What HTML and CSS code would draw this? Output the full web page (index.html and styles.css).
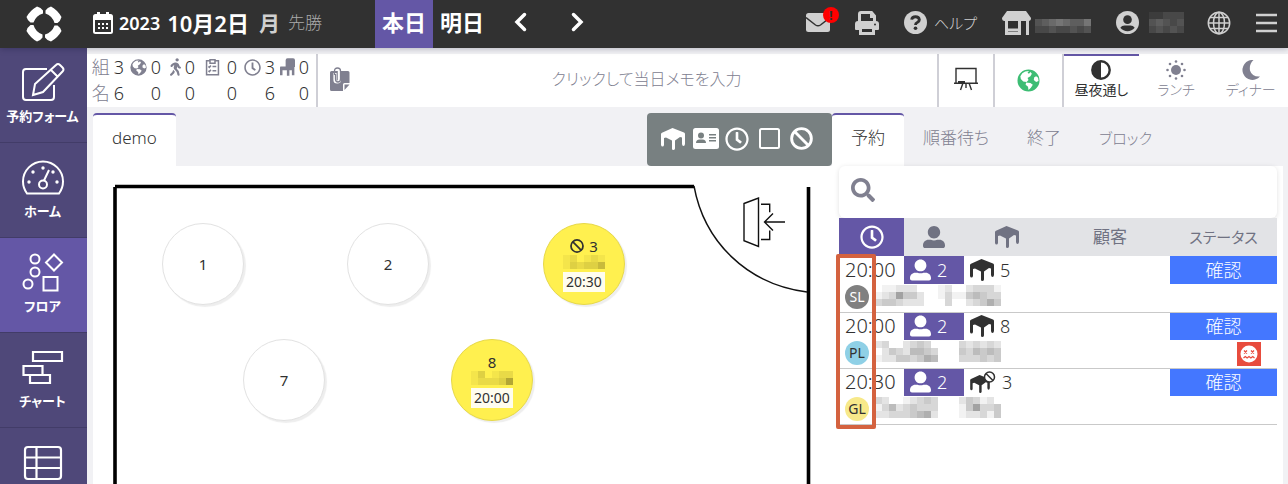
FILE: index.html
```html
<!DOCTYPE html>
<html lang="ja">
<head>
<meta charset="utf-8">
<meta name="viewport" content="width=device-width, initial-scale=1">
<title>フロア</title>
<link rel="stylesheet" href="styles.css">
<script src="mosaic.js" defer></script>
</head>
<body>
<svg class="sprite" aria-hidden="true">
  <symbol id="clock" viewBox="0 0 512 512"><path d="M256 8C119 8 8 119 8 256s111 248 248 248 248-111 248-248S393 8 256 8zm0 448c-110.500 0-200-89.500-200-200S145.500 56 256 56s200 89.500 200 200-89.500 200-200 200zm61.800-104.400l-84.900-61.700c-3.100-2.300-4.900-5.900-4.900-9.700V116c0-6.600 5.400-12 12-12h32c6.600 0 12 5.400 12 12v141.700l66.800 48.600c5.400 3.900 6.500 11.400 2.600 16.800L334.600 349c-3.900 5.300-11.400 6.500-16.800 2.600z"/></symbol>
  <symbol id="search" viewBox="0 0 512 512"><path d="M505 442.700L405.300 343c-4.500-4.500-10.600-7-17-7H372c27.600-35.300 44-79.700 44-128C416 93.100 322.900 0 208 0S0 93.100 0 208s93.100 208 208 208c48.300 0 92.700-16.400 128-44v16.300c0 6.400 2.500 12.500 7 17l99.700 99.700c9.400 9.400 24.600 9.400 33.900 0l28.300-28.300c9.400-9.400 9.400-24.600.1-34zM208 336c-70.700 0-128-57.200-128-128 0-70.700 57.200-128 128-128 70.700 0 128 57.200 128 128 0 70.700-57.200 128-128 128z"/></symbol>
  <symbol id="user" viewBox="0 0 512 512"><path d="M256 288c79.500 0 144-64.500 144-144S335.500 0 256 0 112 64.500 112 144s64.500 144 144 144zm128 32h-55.100c-22.200 10.200-46.900 16-72.900 16s-50.600-5.800-72.900-16H128C57.300 320 0 377.300 0 448v16c0 26.500 21.500 48 48 48h416c26.500 0 48-21.500 48-48v-16c0-70.700-57.300-128-128-128z"/></symbol>
  <symbol id="walk" viewBox="0 0 320 512"><path d="M208 96c26.500 0 48-21.500 48-48S234.500 0 208 0s-48 21.500-48 48 21.500 48 48 48zm94.500 149.100l-23.300-11.800-9.700-29.400c-14.700-44.600-55.700-75.800-102.200-75.900-36-.1-55.900 10.100-93.300 25.200-21.600 8.700-39.300 25.200-49.700 46.200L17.600 213c-7.800 15.800-1.500 35 14.200 42.900 15.600 7.900 34.600 1.500 42.500-14.300L81 228c3.500-7 9.300-12.500 16.500-15.400l26.800-10.800-15.200 60.700c-5.200 20.800.4 42.900 14.900 58.800l59.900 65.400c7.200 7.900 12.300 17.400 14.900 27.700l18.300 73.300c4.300 17.100 21.700 27.600 38.800 23.300 17.100-4.300 27.600-21.700 23.300-38.800l-22.200-89c-2.600-10.300-7.700-19.900-14.900-27.700l-45.500-49.700 17.200-68.700 5.500 16.500c5.300 16.100 16.700 29.400 31.700 37l23.300 11.800c15.600 7.900 34.600 1.500 42.500-14.300 7.700-15.700 1.400-35.100-14.300-43zM73.600 385.800c-3.200 8.100-8 15.400-14.200 21.500l-50 50.100c-12.500 12.500-12.500 32.800 0 45.300s32.700 12.500 45.200 0l59.400-59.400c6.100-6.100 10.900-13.400 14.200-21.500l13.500-33.800c-55.300-60.300-38.700-41.800-47.400-53.700l-20.700 51.500z"/></symbol>
  <symbol id="earth" viewBox="0 0 24 24"><path fill-rule="evenodd" d="M12 .5a11.500 11.500 0 1 1 0 23a11.500 11.500 0 0 1 0-23zM3.500 7.500L4 10.500L6.500 13L10 13.500L12 11.500L11 9.500L14 7.500L15.500 5L14 3L12.500 5L11 4L12.500 2L8.500 2.500L5.500 4.500zM9.500 14L9 16.500L11.500 18.500L12 22L14.500 19.500L16.500 16.500L14 14.500zM18 8.500L17.500 11.500L20 13.500L22.500 12.500L22 9L20 7.500z"/></symbol>
  <symbol id="clipboard" viewBox="0 0 24 28"><path class="line" stroke-width="2.400" d="M8 4H2.500v22.500h19V4H16M8 2.500h8V8H8zM5.500 13l1.500 1.500 2.500-3M12 13h6M5.500 20l1.500 1.500 2.500-3M12 20h6"/></symbol>
  <symbol id="chair" viewBox="0 0 24 28"><path d="M9 3q0-3 3-3h9q3 0 3 3v11H9zM1 13h22v14h-4v-8h-4v9h-4v-9H4v8H0V15q0-2 1-2z"/></symbol>
  <symbol id="table" viewBox="0 0 24 22"><path d="M11.500 0L23 4.500Q24.500 5.500 24 7V16q-.2 2-1.500 2T21 16V9.500l-2-.5-5 3.500v8q-.3 1.500-1.700 1.500T11 20.500v-8L5 9.500l-2 .5v7q-.3 1.500-1.500 1.500T0 17V7q-.3-1.500 1-2.200z"/></symbol>
  <symbol id="ban" viewBox="0 0 24 24"><circle class="line" cx="12" cy="12" r="10.300" stroke-width="3"/><path class="line" stroke-width="3" d="M5 5l14 14"/></symbol>
</svg>

<header class="topbar">
  <a class="logo" href="#" aria-label="トップ">
    <svg width="36" height="36" viewBox="0 0 36 36">
      <g id="petal"><path d="M.5 11Q4 4.500 11 .5q4 1 6 4v3Q10 9.500 7.500 16.500h-3Q1.500 14.500.5 11z"/></g>
      <use href="#petal" transform="rotate(90 18 18)"/><use href="#petal" transform="rotate(180 18 18)"/><use href="#petal" transform="rotate(270 18 18)"/>
    </svg>
  </a>
  <button class="date">
    <svg class="icon" width="20" height="24" viewBox="0 0 20 24"><path class="line" stroke-width="2" d="M2.500 4h15q1.500 0 1.500 1.500v15q0 1.500-1.500 1.500h-15Q1 22 1 20.500v-15Q1 4 2.500 4z"/><path d="M1 4h18v5H1zM4 1h3v4H4zM13 1h3v4h-3zM5 12h2v2H5zM9 12h2v2H9zM13 12h2v2h-2zM5 16h2v2H5zM9 16h2v2H9zM13 16h2v2h-2z"/></svg>
    <span class="year">2023</span><span class="day">10月2日</span><span class="weekday">月</span><span class="rokuyo">先勝</span>
  </button>
  <nav class="day-nav">
    <button class="active">本日</button><button>明日</button>
    <button class="arrow" aria-label="前日"><svg width="14" height="20" viewBox="0 0 14 20"><path class="line" stroke-width="3.500" stroke-linecap="round" d="M10.500 2.500L3 10l7.500 7.500"/></svg></button>
    <button class="arrow" aria-label="翌日"><svg width="14" height="20" viewBox="0 0 14 20"><path class="line" stroke-width="3.500" stroke-linecap="round" d="M3.500 2.500L11 10l-7.500 7.500"/></svg></button>
  </nav>
  <div class="tools">
    <button class="mail" aria-label="メール"><svg width="24" height="19" viewBox="0 0 24 19"><rect width="24" height="19" rx="2.500"/><path class="cut" stroke-width="1.500" d="M0 4.500l9.500 7.500q2.500 1.700 5 0L24 4.500"/></svg><span class="alert">!</span></button>
    <button aria-label="印刷"><svg width="24" height="24" viewBox="0 0 24 24"><path class="line" stroke-width="3" d="M4.500 11V3q0-1.500 1.500-1.500h10.500L19.500 5v6M5.500 16.500h13v6h-13z"/><path d="M3 10h18q3 0 3 3v5q0 1-1 1h-3v-4H4v4H1q-1 0-1-1v-5q0-3 3-3zM15 2h2l3 3v2h-5z"/><circle class="dark" cx="20" cy="13.500" r="1"/></svg></button>
    <button class="help"><svg width="23" height="23" viewBox="0 0 24 24"><circle cx="12" cy="12" r="12"/><path class="cut" stroke-width="3" d="M8 9q.5-3 4-3t4 3q0 1.800-2.200 3Q12 12.700 12 14.500"/><circle class="dark" cx="12" cy="18" r="1.900"/></svg><span>ヘルプ</span></button>
    <button class="shop" aria-label="店舗"><svg width="29" height="24" viewBox="0 0 29 24"><path d="M5 0h19l5 7q0 3-2.500 3h-24Q0 10 0 7z"/><path class="line" stroke-width="3" d="M4.500 9v13.500h13V9M3 19h14"/><path d="M24 9h3v15h-3z"/></svg><svg class="mosaic on-dark" data-rows="34565446|22322323"></svg></button>
    <button class="account" aria-label="アカウント"><svg width="23" height="23" viewBox="0 0 24 24"><circle cx="12" cy="12" r="12"/><circle class="dark" cx="12" cy="9" r="4.500"/><path class="dark" d="M4.500 17.500Q6 15 9 15h6q3 0 4.500 2.500-3 3.500-7.500 3.500T4.500 17.500z"/></svg><svg class="mosaic on-dark" data-rows="011222|034323|023232"></svg></button>
    <button class="lang" aria-label="言語"><svg width="24" height="24" viewBox="0 0 24 24"><g class="line" stroke-width="1.500"><circle cx="12" cy="12" r="10.700"/><ellipse cx="12" cy="12" rx="5.500" ry="10.700"/><path d="M12 1v22M1 12h22M3 6.500h18M3 17.500h18"/></g></svg></button>
    <button aria-label="メニュー"><svg width="21" height="20" viewBox="0 0 21 20"><path class="line" stroke-width="2.400" d="M0 2h21M0 10h21M0 18h21"/></svg></button>
  </div>
</header>

<div class="body">
  <nav class="side">
    <a href="#"><svg width="44" height="40" viewBox="0 0 44 40"><path class="line" stroke-width="2" d="M26 7H5Q2 7 2 10v25q0 3 3 3h25q3 0 3-3V23M12 33l2-11L35 3q2-2 4 0l2.500 2.500q2 2 0 4L22 30zM30 8l6.500 6.500"/></svg>予約フォーム</a>
    <a href="#"><svg width="44" height="40" viewBox="0 0 44 40"><path class="line" stroke-width="2" d="M6 36.500Q2 31 2 24.500a20 20 0 0 1 40 0Q42 31 38 36.500zM23 23.500L28 13"/><circle class="line" stroke-width="2" cx="22" cy="27.500" r="4"/><g><circle cx="22" cy="11" r="1.700"/><circle cx="12" cy="15" r="1.700"/><circle cx="32" cy="15" r="1.700"/><circle cx="8" cy="25" r="1.700"/><circle cx="36" cy="25" r="1.700"/></g></svg>ホーム</a>
    <a href="#" class="active"><svg width="44" height="40" viewBox="0 0 44 40"><g class="line" stroke-width="2"><circle cx="14" cy="7" r="4.500"/><circle cx="14" cy="20" r="4.500"/><circle cx="7" cy="32" r="4.500"/><path d="M33 2.500l8 8-8 8-8-8zM22.500 25h14v13.500h-14z"/></g></svg>フロア</a>
    <a href="#"><svg width="44" height="40" viewBox="0 0 44 40"><path class="line" stroke-width="2.200" d="M12 5h29v9H12zM2.500 19h19v9h-19zM9 28h20v8H9z"/></svg>チャート</a>
    <a href="#" aria-label="台帳"><svg width="44" height="40" viewBox="0 0 44 40"><g class="line" stroke-width="2.200"><rect x="4" y="5" width="36" height="32" rx="3"/><path d="M15.500 5v32M4 15.500h36M4 26h36"/></g></svg></a>
  </nav>

  <main>
    <section class="summary">
      <table class="counts">
        <colgroup><col class="c0"><col class="c1"><col class="c2"><col class="c3"><col class="c4"><col class="c2"></colgroup>
        <tr>
          <td><div><span>組</span><b>3</b></div></td>
          <td><div><svg width="17" height="17"><use href="#earth"/></svg><b>0</b></div></td>
          <td><div><svg width="11" height="18"><use href="#walk"/></svg><b>0</b></div></td>
          <td><div class="wide"><svg width="15" height="18"><use href="#clipboard"/></svg><b>0</b></div></td>
          <td><div><svg width="17" height="17"><use href="#clock"/></svg><b>3</b></div></td>
          <td><div><svg width="15" height="18"><use href="#chair"/></svg><b>0</b></div></td>
        </tr>
        <tr>
          <td><div><span>名</span><b>6</b></div></td>
          <td><b>0</b></td><td><b>0</b></td><td><b>0</b></td><td><b>6</b></td><td><b>0</b></td>
        </tr>
      </table>
      <label class="memo">
        <svg width="20" height="24" viewBox="0 0 20 24"><path d="M1.500 4H18q1.500 0 1.500 1.500V16h-5Q13 16 13 17.500V24H1.500Q0 24 0 22.500v-17Q0 4 1.500 4zM14.500 17.500h5L14.500 23z"/><g fill="none" stroke-width="3.200" stroke="#fff"><path d="M5 6v7q0 2 2.200 2t2.200-2V4"/></g><path class="line" stroke-width="1.300" d="M4.500 8V4Q4.500 1 7.500 1t3 3v8q0 3-2.500 3T5.500 12V7"/></svg>
        <input type="text" placeholder="クリックして当日メモを入力" aria-label="当日メモ">
      </label>
      <button class="tile board" aria-label="ボード"><svg width="24" height="24" viewBox="0 0 24 24"><path class="line" stroke-width="1.400" d="M2 16V1.500h20V16M0 16.200h24M9 16l-2.500 7M12 16v5M15 16l2.500 7"/><path d="M4 14h7v2H4z"/></svg></button>
      <button class="tile web" aria-label="ウェブ"><svg width="23" height="23"><use href="#earth"/></svg></button>
      <nav class="periods">
        <button class="active"><svg width="20" height="20" viewBox="0 0 20 20"><circle class="line" stroke-width="2.400" cx="10" cy="10" r="8.700"/><path d="M10 1a9 9 0 0 0 0 18z"/></svg>昼夜通し</button>
        <button><svg width="20" height="20" viewBox="0 0 20 20"><circle cx="10" cy="10" r="5"/><g><circle cx="10" cy="1.500" r="1.300"/><circle cx="10" cy="18.500" r="1.300"/><circle cx="1.500" cy="10" r="1.300"/><circle cx="18.500" cy="10" r="1.300"/><circle cx="4" cy="4" r="1.300"/><circle cx="16" cy="4" r="1.300"/><circle cx="4" cy="16" r="1.300"/><circle cx="16" cy="16" r="1.300"/></g></svg>ランチ</button>
        <button><svg width="20" height="20" viewBox="0 0 20 20"><path d="M12.500 0A10 10 0 1 0 19 16.500Q11 17 9 10.500 8 4 12.500 0z"/></svg>ディナー</button>
      </nav>
    </section>

    <div class="work">
      <section class="floor">
        <div class="floor-head">
          <button class="tab active">demo</button>
          <div class="toolbox">
            <button aria-label="テーブル"><svg width="24" height="22"><use href="#table"/></svg></button>
            <button aria-label="顧客カード"><svg width="26" height="21" viewBox="0 0 26 21"><rect width="26" height="21" rx="2.500"/><g fill="#788081"><circle cx="8" cy="7.500" r="3"/><path d="M3 15q0-3.500 3.500-3.500h3Q13 11.500 13 15zM16 6h7v1.500h-7zM16 9h7v1.500h-7zM16 12h7v1.500h-7z"/></g></svg></button>
            <button aria-label="時間"><svg width="24" height="24"><use href="#clock"/></svg></button>
            <button aria-label="選択"><svg width="21" height="21" viewBox="0 0 21 21"><rect class="line" stroke-width="2" x="1" y="1" width="19" height="19" rx="1.500"/></svg></button>
            <button aria-label="ブロック"><svg width="23" height="23"><use href="#ban"/></svg></button>
          </div>
        </div>
        <div class="plan">
          <svg class="walls" width="740" height="320" viewBox="0 0 740 320">
            <path d="M22 20.500H601M22 21V320M715.500 21V320" stroke="#000" stroke-width="3.600"/>
            <g stroke="#111" stroke-width="1.400"><path d="M601 20C611 75 653 118 714 126"/><path d="M651 37.500l14.500-5.500v48.500L651 74.700zM668 38.300h8.700v8M676.700 64.500v9H668M692 56h-20M680 47.500l-8.500 8.500 8.500 8.500"/></g>
          </svg>
          <button class="seat t1">1</button>
          <button class="seat t2">2</button>
          <button class="seat taken t3"><span><svg width="14" height="14"><use href="#ban"/></svg>3</span><svg class="mosaic on-seat" data-rows="120121|132335"></svg><time>20:30</time></button>
          <button class="seat t7">7</button>
          <button class="seat taken t8"><span>8</span><svg class="mosaic on-seat" data-rows="130122|122237"></svg><time>20:00</time></button>
        </div>
      </section>

      <section class="list">
        <nav class="list-tabs">
          <button class="tab active">予約</button><button class="tab">順番待ち</button><button class="tab">終了</button><button class="tab kana">ブロック</button>
        </nav>
        <div class="list-body">
          <label class="search"><svg width="24" height="24"><use href="#search"/></svg><input type="text" aria-label="検索"></label>
          <div class="table-wrap">
            <table class="bookings">
              <colgroup><col class="w-time"><col class="w-pax"><col class="w-seat"><col><col class="w-state"></colgroup>
              <thead><tr>
                <th class="sorted"><svg width="24" height="24"><use href="#clock"/></svg></th>
                <th><svg width="22" height="24"><use href="#user"/></svg></th>
                <th><svg width="24" height="22"><use href="#table"/></svg></th>
                <th>顧客</th><th class="kana">ステータス</th>
              </tr></thead>
              <tbody>
                <tr><td class="time">20:00</td><td class="pax"><div><svg width="21" height="24"><use href="#user"/></svg>2</div></td><td><div class="seat-no"><svg width="24" height="22"><use href="#table"/></svg>5</div></td><td></td><td class="state"><button>確認</button></td></tr>
                <tr class="who"><td colspan="4"><div><span class="tag sl">SL</span><svg class="mosaic" data-rows="011222000120023331|123744200131145433|344322200030023464"></svg></div></td><td></td></tr>
              </tbody>
              <tbody>
                <tr><td class="time">20:00</td><td class="pax"><div><svg width="21" height="24"><use href="#user"/></svg>2</div></td><td><div class="seat-no"><svg width="24" height="22"><use href="#table"/></svg>8</div></td><td></td><td class="state"><button>確認</button></td></tr>
                <tr class="who"><td colspan="4"><div><span class="tag pl">PL</span><svg class="mosaic" data-rows="230023430000323232|024325543000435454|122443465000333434"></svg></div></td><td><svg class="face" width="24" height="24" viewBox="0 0 24 24"><rect width="24" height="24" fill="#e84c3d"/><circle cx="12" cy="12" r="8.500" fill="#fff"/><path fill="none" stroke="#e84c3d" stroke-width="1.300" d="M7 8.500l3 3M10 8.500l-3 3M14 8.500l3 3M17 8.500l-3 3M6.500 16l1.800-1.500 1.800 1.500 1.900-1.500 1.900 1.500 1.800-1.500 1.800 1.500"/></svg></td></tr>
              </tbody>
              <tbody>
                <tr><td class="time">20:30</td><td class="pax"><div><svg width="21" height="24"><use href="#user"/></svg>2</div></td><td><div class="seat-no"><svg width="26" height="22" viewBox="0 0 26 22"><use href="#table" x="0" y="4" width="20" height="18"/><circle cx="19.500" cy="6" r="5" fill="#fff" stroke="#313131" stroke-width="1.500"/><path class="line" stroke-width="1.500" d="M16 2.500l7 7"/></svg>3</div></td><td></td><td class="state"><button>確認</button></td></tr>
                <tr class="who"><td colspan="4"><div><span class="tag gl">GL</span><svg class="mosaic" data-rows="320012343000243120|135234333000147334|223334562000122314"></svg></div></td><td></td></tr>
              </tbody>
            </table>
            <div class="highlight"></div>
          </div>
        </div>
      </section>
    </div>
  </main>
</div>
</body>
</html>
```
FILE: mosaic.js
```js
// Builds masked names: each digit is the darkness of one 7px cell.
document.querySelectorAll('.mosaic').forEach(function (svg) {
  var rows = svg.dataset.rows.split('|');
  svg.setAttribute('width', rows[0].length * 7);
  svg.setAttribute('height', rows.length * 7);
  rows.forEach(function (row, y) {
    row.split('').forEach(function (n, x) {
      var cell = document.createElementNS('http://www.w3.org/2000/svg', 'rect');
      cell.setAttribute('x', x * 7);
      cell.setAttribute('y', y * 7);
      cell.setAttribute('width', 7);
      cell.setAttribute('height', 7);
      cell.setAttribute('fill-opacity', n * 0.06);
      svg.appendChild(cell);
    });
  });
});
```
FILE: styles.css
```css
* { box-sizing: border-box; }
body {
  margin: 0;
  height: 100vh;
  overflow: hidden;
  display: flex;
  flex-direction: column;
  background: #f1f1f4;
  color: #313131;
  font: 300 18px/24px "Noto Sans", "Noto Sans CJK JP", sans-serif;
  font-feature-settings: "palt";
}
button, input {
  font: inherit;
  font-feature-settings: inherit;
  color: inherit;
  background: none;
  border: 0;
  padding: 0;
  margin: 0;
  border-radius: 0;
}
button { cursor: pointer; }
a { color: inherit; text-decoration: none; }
table { border-collapse: collapse; table-layout: fixed; }
td, th { padding: 0; font-weight: 300; }
svg { display: block; flex: none; fill: currentColor; }
.line { fill: none; stroke: currentColor; }
.sprite { position: absolute; width: 0; height: 0; }

.topbar {
  display: flex;
  flex: none;
  height: 48px;
  background: #313131;
  color: #d0d0d0;
  box-shadow: 0 1px 6px rgba(0, 0, 40, .25);
  position: relative;
}
.cut { fill: none; stroke: #313131; }
.dark { fill: #313131; }
.logo { width: 87px; display: grid; place-items: center; color: #fff; }
.date { display: flex; align-items: center; width: 288px; padding: 0 0 3px 6px; color: #fff; white-space: nowrap; }
.year { font-size: 18px; font-weight: 600; margin-left: 6px; }
.day { font-size: 22px; font-weight: 600; margin-left: 7px; }
.weekday { font-size: 21px; font-weight: 700; margin-left: 10px; color: #d0d0d0; }
.rokuyo { font-size: 17px; margin-left: 8px; color: #aaa; }
.day-nav { display: flex; color: #fff; }
.day-nav button { width: 58px; font-size: 22px; font-weight: 600; padding-bottom: 4px; }
.day-nav .active { background: #6457a6; }
.day-nav .arrow { width: 56px; padding-left: 4px; display: grid; place-items: center; }
.tools { display: flex; align-items: center; margin-left: auto; padding: 0 11px 3px 0; }
.tools button { display: flex; align-items: center; margin-left: 25px; }
.tools .help { gap: 7px; font-size: 15px; }
.tools .shop { gap: 4px; }
.tools .account { gap: 3px; }
.tools .lang { margin-left: 23px; }
.shop .mosaic { margin-top: 6px; }
.mail { position: relative; }
.alert {
  position: absolute;
  left: 17px;
  top: -6px;
  width: 16px;
  height: 16px;
  border-radius: 8px;
  background: #f00;
  color: #313131;
  font-size: 13px;
  font-weight: 700;
  line-height: 16px;
}
.mosaic { fill: #222; shape-rendering: crispEdges; }
.on-dark { fill: #eee; }
.on-seat { fill: #4a4010; }

.body { display: flex; flex: 1; min-height: 0; }
.side { width: 87px; flex: none; background: #4f4879; color: #fff; overflow: hidden; }
.side a {
  display: flex;
  flex-direction: column;
  align-items: center;
  height: 95px;
  padding: 14px 2px 0 0;
  border-bottom: 1px solid #423c68;
  font-size: 13px;
  font-weight: 600;
  line-height: 22px;
}
.side svg { margin-bottom: 3px; }
.side .active { background: #6457a6; }
main { flex: 1; min-width: 0; display: flex; flex-direction: column; padding-top: 6px; gap: 6px; }

.summary { display: flex; background: #fff; height: 53px; flex: none; }
.counts { width: 216px; margin-left: 6px; line-height: 25px; color: #808090; }
.counts td { text-align: right; vertical-align: middle; }
.counts div { display: flex; align-items: center; justify-content: flex-end; gap: 4px; }
.counts .wide { gap: 7px; }
.counts b { font-weight: 300; color: #313131; }
.c0 { width: 31px; }
.c1 { width: 37px; }
.c2 { width: 34px; }
.c3 { width: 42px; }
.c4 { width: 38px; }
.memo { flex: 1; display: flex; align-items: center; gap: 6px; margin-left: 7px; padding: 0 0 3px 12px; border-left: 2px solid #cfcfd6; color: #808090; }
.memo input { flex: 1; min-width: 0; text-align: center; font-size: 16px; }
.memo input::placeholder { color: #808090; opacity: 1; }
.tile { border-left: 2px solid #cfcfd6; display: grid; place-items: center; }
.board { width: 56px; padding-bottom: 3px; }
.web { width: 69px; color: #3dbd74; }
.periods { display: flex; width: 226px; border-left: 2px solid #cfcfd6; }
.periods button {
  flex: 1;
  display: flex;
  flex-direction: column;
  align-items: center;
  padding-top: 4px;
  border-top: 2px solid transparent;
  color: #808090;
  font-size: 14px;
  line-height: 20px;
}
.periods .active { border-color: #6457a6; color: #313131; font-weight: 400; }

.work { flex: 1; display: flex; min-height: 0; padding: 0 5px 0 6px; }
.floor { flex: 1; min-width: 0; display: flex; flex-direction: column; }
.floor-head { display: flex; justify-content: space-between; }
.tab { height: 53px; padding: 0 19px 6px; border-top: 2px solid transparent; font-size: 17px; color: #808090; }
.tab.active { background: #fff; border-color: #6457a6; border-radius: 4px 4px 0 0; color: #313131; }
.toolbox { display: flex; align-items: center; gap: 8px; padding: 0 19px 2px 14px; background: #788081; border-radius: 4px; color: #fff; }
.toolbox button { width: 24px; display: grid; place-items: center; }
.plan { position: relative; flex: 1; background: #fff; overflow: hidden; }
.walls { fill: none; }
.seat {
  position: absolute;
  width: 82px;
  height: 82px;
  border-radius: 50%;
  border: 1px solid #e2e2e2;
  background: #fff;
  box-shadow: 2px 2px 1px #eee;
  font-size: 15px;
  font-weight: 400;
  line-height: 18px;
}
.taken { display: flex; flex-direction: column; align-items: center; padding-top: 13px; background: #fff04f; border-color: #e6d84a; }
.taken span { display: flex; align-items: center; gap: 5px; }
.seat time { background: #fffdee; padding: 0 3px; font-size: 14px; line-height: 20px; height: 20px; margin-top: 3px; }
.t1 { left: 69px; top: 57px; }
.t2 { left: 254px; top: 57px; }
.t3 { left: 450px; top: 57px; }
.t7 { left: 150px; top: 173px; }
.t8 { left: 358px; top: 173px; }

.list { width: 451px; flex: none; display: flex; flex-direction: column; }
.list-tabs { display: flex; }
.list-tabs .kana { font-size: 15px; }
.list-body { flex: 1; background: #fff; padding: 0 6px 0 7px; }
.search { display: flex; align-items: center; gap: 8px; height: 52px; padding: 0 12px 4px; border-radius: 6px; box-shadow: 0 1px 5px rgba(0, 0, 0, .12); color: #808090; }
.search input { flex: 1; min-width: 0; }
.table-wrap { position: relative; }
.bookings { width: 100%; }
.w-time { width: 65px; }
.w-pax { width: 60px; }
.w-seat { width: 86px; }
.w-state { width: 107px; }
.bookings th { height: 38px; background: #e2e3e6; color: #707282; font-weight: 400; font-size: 17px; }
.bookings .kana { font-size: 15px; }
.bookings th svg { margin: auto; }
.bookings .sorted { background: #6457a6; color: #fff; }
.bookings tbody tr { height: 28px; }
.bookings .who { border-bottom: 1px solid #c9c9c9; }
.time { font-size: 20px; padding-left: 6px; }
.pax { background: #6457a6; color: #fff; }
.pax div, .seat-no { display: flex; align-items: center; gap: 6px; padding-left: 6px; }
.state { background: #4477ff; color: #fff; text-align: center; }
.who td { vertical-align: top; }
.who div { display: flex; align-items: flex-start; gap: 6px; padding: 1px 0 0 6px; }
.tag { width: 24px; height: 24px; border-radius: 12px; font-size: 14px; font-weight: 400; text-align: center; }
.sl { background: #808080; color: #fff; }
.pl { background: #8fd0e6; }
.gl { background: #f7e98a; }
.face { margin: 2px 16px 0 auto; }
.highlight { position: absolute; left: -3px; top: 36px; width: 40px; height: 175px; border: 4px solid #d4623f; border-radius: 2px; pointer-events: none; }
```
